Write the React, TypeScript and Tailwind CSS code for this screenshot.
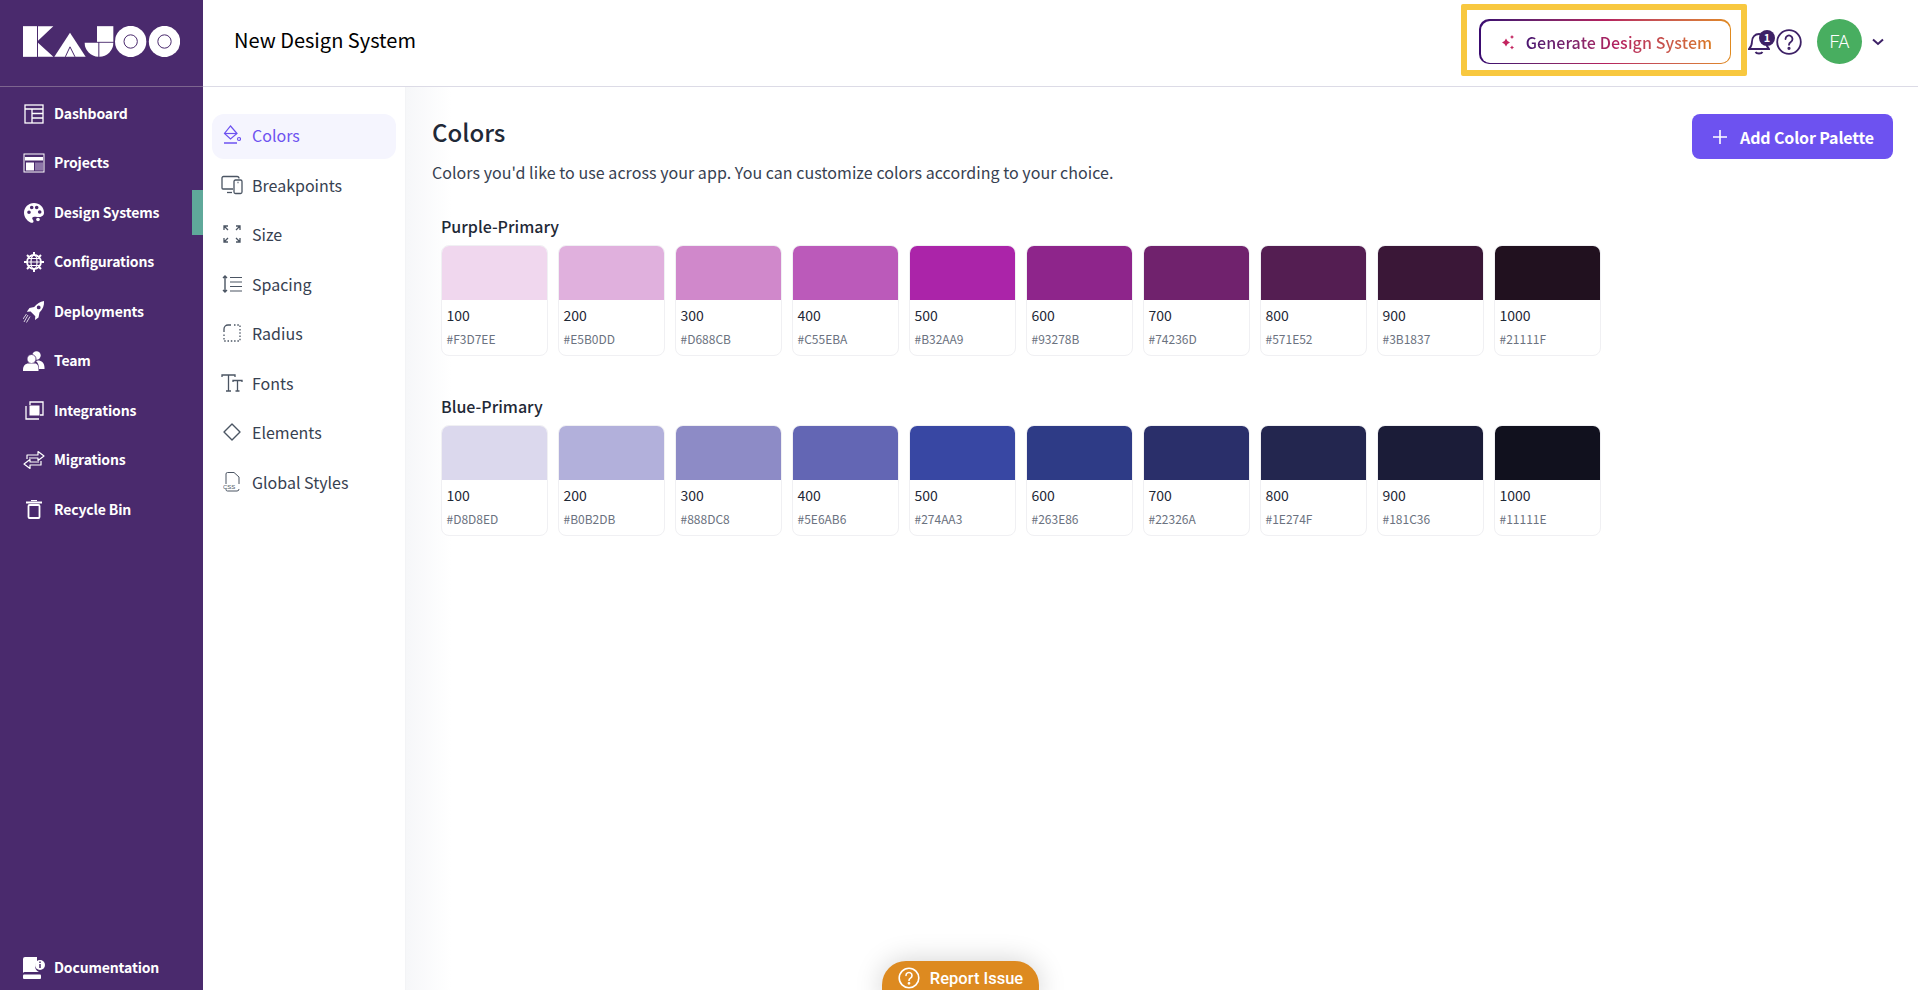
import type { ReactNode } from "react";

const SANS = "font-['Noto_Sans_CJK_JP','Noto_Sans',sans-serif]";

type Swatch = { readonly step: string; readonly hex: string; readonly fill: string };

const purple: Swatch[] = [
  { step: "100", hex: "#F3D7EE", fill: "bg-[#f0d7ee]" },
  { step: "200", hex: "#E5B0DD", fill: "bg-[#e0b0dd]" },
  { step: "300", hex: "#D688CB", fill: "bg-[#d088cb]" },
  { step: "400", hex: "#C55EBA", fill: "bg-[#bb5aba]" },
  { step: "500", hex: "#B32AA9", fill: "bg-[#ab24a9]" },
  { step: "600", hex: "#93278B", fill: "bg-[#8e258b]" },
  { step: "700", hex: "#74236D", fill: "bg-[#70226d]" },
  { step: "800", hex: "#571E52", fill: "bg-[#541e52]" },
  { step: "900", hex: "#3B1837", fill: "bg-[#3a1737]" },
  { step: "1000", hex: "#21111F", fill: "bg-[#21111f]" },
];

const blue: Swatch[] = [
  { step: "100", hex: "#D8D8ED", fill: "bg-[#dbd8ed]" },
  { step: "200", hex: "#B0B2DB", fill: "bg-[#b2b0db]" },
  { step: "300", hex: "#888DC8", fill: "bg-[#8d8bc6]" },
  { step: "400", hex: "#5E6AB6", fill: "bg-[#6366b4]" },
  { step: "500", hex: "#274AA3", fill: "bg-[#3847a3]" },
  { step: "600", hex: "#263E86", fill: "bg-[#2e3b86]" },
  { step: "700", hex: "#22326A", fill: "bg-[#2a2f6a]" },
  { step: "800", hex: "#1E274F", fill: "bg-[#23264f]" },
  { step: "900", hex: "#181C36", fill: "bg-[#1b1c38]" },
  { step: "1000", hex: "#11111E", fill: "bg-[#11111e]" },
];

const KajooLogo = () => (
  <svg width="157" height="31" viewBox="0 0 471 92" fill="white">
    <rect x="0" y="0" width="42" height="92" />
    <path d="M45 0h46L45 44zM45 50l46 42H45z" />
    <path d="M94 92 141 20l47 72z" />
    <path d="M127 92 141 62l15 30" fill="none" stroke="#4a2a6d" strokeWidth="3" />
    <path d="M222 0h49v47h-49z" />
    <path d="M185 50h41v42a42 42 0 0 1-41-42zM229 50h42a42 42 0 0 1-42 42z" />
    <circle cx="323" cy="46" r="47" />
    <circle cx="424.500" cy="46" r="47" />
    <circle cx="323" cy="46" r="20" fill="none" stroke="#4a2a6d" strokeWidth="3" />
    <circle cx="424.500" cy="46" r="20" fill="none" stroke="#4a2a6d" strokeWidth="3" />
  </svg>
);

const sideIcons: Record<string, ReactNode> = {
  Dashboard: (
    <svg width="20" height="20" viewBox="0 0 20 20" fill="none" stroke="white" strokeWidth="1.300">
      <rect x="1" y="1" width="18" height="18" />
      <path d="M1 5h18M8 5v14M8 9.500h11M8 14h11" />
    </svg>
  ),
  Projects: (
    <svg width="22" height="20" viewBox="0 0 22 20" fill="none">
      <rect x="1" y="1" width="20" height="18" stroke="white" />
      <rect x="2" y="4" width="18" height="3.500" fill="white" />
      <rect x="3" y="9.500" width="8" height="8" fill="white" />
      <rect x="12" y="9.500" width="8" height="8" fill="#8d76a8" />
    </svg>
  ),
  "Design Systems": (
    <svg width="20" height="20" viewBox="0 0 20 20" fill="white">
      <path
        fillRule="evenodd"
        d="M10 0C4.500 0 0 4.300 0 9.700c0 4.100 2.900 7.900 6 9.500 1.600.8 3.500.8 3.500-.8 0-1.700-2-2.300-1-3.900.7-1.100 2.700-.6 4.600-.5 3.500.3 6.900-.8 6.900-4.600C20 4 15.500 0 10 0zM5 11a1.800 1.800 0 1 1 0-3.600A1.800 1.800 0 0 1 5 11zm2.700-4.700a1.800 1.800 0 1 1 0-3.600 1.800 1.800 0 0 1 0 3.600zm5 0a1.800 1.800 0 1 1 0-3.600 1.800 1.800 0 0 1 0 3.600zm3 4.500a1.800 1.800 0 1 1 0-3.600 1.800 1.800 0 0 1 0 3.600z"
      />
      <circle cx="14" cy="16.500" r="1.800" />
    </svg>
  ),
  Configurations: (
    <svg width="20" height="20" viewBox="0 0 20 20" fill="none" stroke="white" strokeWidth="1.200">
      <circle cx="10" cy="10" r="7" strokeWidth="1.800" />
      <ellipse cx="10" cy="10" rx="3" ry="7" />
      <path d="M3 10h14M4 6.500h12M4 13.500h12" />
      <path d="M10 0v3M10 17v3M0 10h3M17 10h3M3 3l2 2M15 15l2 2M17 3l-2 2M5 15l-2 2" strokeWidth="2" />
    </svg>
  ),
  Deployments: (
    <svg width="22" height="22" viewBox="0 0 22 22" fill="white">
      <path
        fillRule="evenodd"
        d="M21 0c.4 4.500-1.200 8.500-4.500 11.500l-1 5-3.500 2.500.3-3.800-4.700-4.700-3.800.3L6.500 7l4.700-1C14 2.500 17 .6 21 0zm-5.300 4.500a1.900 1.900 0 1 0 0 3.800 1.900 1.900 0 0 0 0-3.800z"
      />
      <path d="M5 14 1 21M7 15.500 3.500 21.500M3.500 13 0 18" stroke="white" strokeWidth=".8" />
    </svg>
  ),
  Team: (
    <svg width="22" height="20" viewBox="0 0 22 20" fill="white">
      <circle cx="13.500" cy="4.500" r="4.200" />
      <path d="M15 9.500c3.500 0 6.500 2.500 6.500 7v1.500H16c0-3.500-1-6.500-3-8z" />
      <circle cx="8.500" cy="8" r="4.500" stroke="#4a2a6d" strokeWidth=".8" />
      <path d="M0 20v-1.500c0-4 3-6 5-6h7c2.500 0 3.500 2.500 3.500 6V20z" />
    </svg>
  ),
  Integrations: (
    <svg width="19" height="19" viewBox="0 0 19 19" fill="none" stroke="white" strokeWidth="1.300">
      <path d="M1 5v13h13M5 4V1h13v13h-3" />
      <rect x="4.500" y="4.500" width="10" height="10" fill="white" stroke="none" />
    </svg>
  ),
  Migrations: (
    <svg width="22" height="20" viewBox="0 0 22 20" fill="none" stroke="white" strokeWidth="1.200" strokeLinejoin="round">
      <path d="M4 9V5h11V1.500L21 6l-6 4.500V8H6" />
      <path d="M18 11v4H7v3.500L1 14l6-4.500V12h9" />
    </svg>
  ),
  "Recycle Bin": (
    <svg width="16" height="19" viewBox="0 0 16 19" fill="none" stroke="white">
      <path d="M0 2.500h16" strokeWidth="2" />
      <path d="M5 .5h6" strokeWidth="1.200" />
      <rect x="2.500" y="5" width="11" height="13" rx="1" strokeWidth="1.800" />
    </svg>
  ),
  Documentation: (
    <svg width="22" height="22" viewBox="0 0 22 22" fill="white">
      <path d="M2 0h12v5a6 6 0 0 0 2 10H2a2 2 0 0 0-2 1V2a2 2 0 0 1 2-2z" />
      <rect x="0" y="17.500" width="18" height="4.500" rx="1" />
      <circle cx="17" cy="8" r="5" />
      <path d="M17 7v4M17 4.500v1.500" stroke="#4a2a6d" strokeWidth="1.500" />
    </svg>
  ),
};

const subIcons: Record<string, ReactNode> = {
  Colors: (
    <svg width="18" height="20" viewBox="0 0 18 20" fill="none" stroke="#6d52f0" strokeWidth="1.200">
      <path d="M7.500 1 14 8.500 7.500 14 1.500 8.500z" />
      <path d="M1.500 8.500h12.500" />
      <path d="M1 18h13" strokeWidth="1.500" />
      <circle cx="16" cy="14" r="1.500" />
    </svg>
  ),
  Breakpoints: (
    <svg width="22" height="20" viewBox="0 0 22 20" fill="none" stroke="#4b5563" strokeWidth="1.300">
      <path d="M12 14H2a1 1 0 0 1-1-1V3a1.500 1.500 0 0 1 1.500-1.500H16a2 2 0 0 1 2 2" />
      <path d="M6 17.500h5" />
      <rect x="13" y="5" width="8" height="13.500" rx="1.500" />
      <path d="M16.500 7.500h1" />
    </svg>
  ),
  Size: (
    <svg width="18" height="18" viewBox="0 0 18 18" fill="none" stroke="#4b5563" strokeWidth="1.300">
      <path d="M1 5V1h4M1 1l4 4M17 5V1h-4M17 1l-4 4M1 13v4h4M1 17l4-4M17 13v4h-4M17 17l-4-4" />
    </svg>
  ),
  Spacing: (
    <svg width="20" height="18" viewBox="0 0 20 18" fill="none" stroke="#4b5563" strokeWidth="1.200">
      <path d="M3 1v16M1 3l2-2 2 2M1 15l2 2 2-2" strokeWidth="1.400" />
      <path d="M8 2.500h12M8 7h12M8 11.500h12M8 16h12" />
    </svg>
  ),
  Radius: (
    <svg width="18" height="18" viewBox="0 0 18 18" fill="none" stroke="#4b5563" strokeWidth="1.300">
      <path d="M1 8V5a4 4 0 0 1 4-4h3" />
      <path d="M11 1h6v16H1v-7" strokeDasharray="1.500 1.800" />
    </svg>
  ),
  Fonts: (
    <svg width="22" height="18" viewBox="0 0 22 18" fill="none" stroke="#4b5563" strokeWidth="1.300">
      <path d="M1 3V1h13v2M7.500 1v16M5 17h5" />
      <path d="M12 8V6.500h9V8M16.500 6.500V17M14.500 17h4" />
    </svg>
  ),
  Elements: (
    <svg width="18" height="18" viewBox="0 0 18 18" fill="none" stroke="#4b5563" strokeWidth="1.400" strokeLinejoin="round">
      <path d="M9 1l8 8-8 8-8-8z" />
    </svg>
  ),
  "Global Styles": (
    <svg width="18" height="20" viewBox="0 0 18 20" fill="none" stroke="#4b5563" strokeWidth="1">
      <path d="M3 12V2a1.500 1.500 0 0 1 1.500-1.500H11L16 5v7" />
      <path d="M3 17v.5A1.500 1.500 0 0 0 4.500 19H14a2 2 0 0 0 2-2" />
      <text x="0" y="16.500" fontSize="6" fill="#4b5563" stroke="none" fontFamily="Liberation Sans, sans-serif">CSS</text>
    </svg>
  ),
};

const sideItems = [
  "Dashboard",
  "Projects",
  "Design Systems",
  "Configurations",
  "Deployments",
  "Team",
  "Integrations",
  "Migrations",
  "Recycle Bin",
];

const subItems = ["Colors", "Breakpoints", "Size", "Spacing", "Radius", "Fonts", "Elements", "Global Styles"];

const SwatchCard = ({ swatch }: { readonly swatch: Swatch }) => (
  <div className="h-[111px] w-[107px] shrink-0 overflow-hidden rounded-[8px] border border-[#f0f0f3] bg-white">
    <div className={`h-[54px] ${swatch.fill}`} />
    <div className="px-[4.500px] pt-[5px] text-[14px] leading-[20px] text-[#1f2937]">{swatch.step}</div>
    <div className="px-[4.500px] pt-[6px] text-[12px] leading-[16px] text-[#6b7280]">{swatch.hex}</div>
  </div>
);

const Palette = ({ name, swatches }: { readonly name: string; readonly swatches: Swatch[] }) => (
  <section className="ml-[9px]">
    <h3 className="mb-[7px] h-[24px] text-[16px] leading-[24px] font-medium text-[#1f2937]">{name}</h3>
    <div className="flex gap-[10px]">
      {swatches.map((s) => (
        <SwatchCard key={s.step} swatch={s} />
      ))}
    </div>
  </section>
);

export default function App() {
  return (
    <div className={`flex h-[990px] w-[1918px] overflow-hidden bg-white ${SANS}`}>
      <aside className="flex w-[203px] shrink-0 flex-col bg-[#4a2a6d]">
        <div className="flex h-[87px] shrink-0 items-center border-b border-[#7d658f] pb-[4px] pl-[23px]">
          <KajooLogo />
        </div>
        <nav className="flex flex-col gap-[4.450px] pt-[4.500px]">
          {sideItems.map((item) => (
            <div
              key={item}
              className={`flex h-[45px] items-center border-r-[11px] pl-[23px] ${
                item === "Design Systems" ? "border-[#5fa89a]" : "border-transparent"
              }`}
            >
              <span className="mr-[9px] flex w-[22px] shrink-0 items-center justify-center">{sideIcons[item]}</span>
              <span className="pb-[1px] text-[14px] font-bold tracking-[-0.15px] text-white">{item}</span>
            </div>
          ))}
        </nav>
        <div className="mt-auto flex h-[44px] items-center pb-[1px] pl-[23px]">
          <span className="mr-[9px] flex w-[22px] shrink-0 items-center justify-center">{sideIcons.Documentation}</span>
          <span className="text-[14px] font-bold tracking-[-0.15px] text-white">Documentation</span>
        </div>
      </aside>

      <div className="flex min-w-0 flex-1 flex-col">
        <header className="flex h-[87px] shrink-0 items-center border-b border-[#dcdbe6] pb-[6px] pl-[31px]">
          <h1 className="text-[20px] font-normal text-black">New Design System</h1>
          <div className="ml-auto flex items-center">
            <div className="flex h-[72px] w-[286px] items-center rounded-[2px] border-[6px] border-[#f8c83f] pt-[3px] pl-[12px]">
              <div className="h-[45px] w-[252px] rounded-[10px] bg-gradient-to-r from-[#3a0a70] via-[#b5205e] to-[#e08a1e] p-[1.500px]">
                <div className="flex h-full items-center justify-center gap-[11px] rounded-[9px] bg-white pl-[3px]">
                  <svg width="14" height="16" viewBox="0 0 14 16" fill="#c3245f">
                    <path d="M5 4.500 6.500 7 9 8.500 6.500 10 5 12.500 3.500 10 1 8.500 3.500 7z" />
                    <path d="M11 1l.7 1.300L13 3l-1.300.7L11 5l-.7-1.300L9 3l1.300-.7zM11 11.500l.7 1.300 1.300.7-1.300.7-.7 1.300-.7-1.300-1.300-.7 1.300-.7z" />
                  </svg>
                  <span className="bg-gradient-to-r from-[#4a1470] via-[#b5205e] to-[#d9781f] bg-clip-text text-[16px] font-medium tracking-[0.1px] text-transparent">
                    Generate Design System
                  </span>
                </div>
              </div>
            </div>
            <div className="flex items-center pt-[3px]">
              <div className="relative h-[28px] w-[27px]">
                <svg width="22" height="24" viewBox="0 0 22 24" fill="none" stroke="#3d2166" strokeWidth="1.800" className="mt-[3px] ml-[1px]">
                  <path d="M1 18c2-2 3-3.500 3-7.500C4 6 7 3 11 3s7 3 7 7.500c0 4 1 5.500 3 7.500z" />
                  <path d="M7.500 21c1 2 6 2 7 0" />
                </svg>
                <span className="absolute top-[2px] left-[12px] flex h-[16px] w-[16px] items-center justify-center rounded-full bg-[#3d2166] text-[11px] leading-none font-bold text-white">
                  1
                </span>
              </div>
              <svg width="26" height="26" viewBox="0 0 26 26" fill="none" stroke="#3d2166" strokeWidth="1.800" className="ml-[2px]">
                <circle cx="13" cy="13" r="11.800" />
                <path d="M9.500 10a3.500 3.500 0 1 1 5.300 3c-1.200.8-1.800 1.400-1.800 2.800" strokeLinecap="round" />
                <circle cx="13" cy="19.300" r=".7" fill="#3d2166" />
              </svg>
              <div className="ml-[15px] flex h-[45px] w-[45px] items-center justify-center rounded-full bg-[#48ae60] font-['Roboto',sans-serif] text-[18px] font-light text-white">
                FA
              </div>
              <svg width="12" height="8" viewBox="0 0 12 8" fill="none" stroke="#3d2166" strokeWidth="2" className="mr-[34px] ml-[10px]">
                <path d="M1 1.500 6 6l5-4.500" />
              </svg>
            </div>
          </div>
        </header>

        <div className="flex min-h-0 flex-1">
          <nav className="flex w-[202px] shrink-0 flex-col gap-[4.500px] px-[9px] pt-[27px]">
            {subItems.map((item) => (
              <div
                key={item}
                className={`flex h-[45px] shrink-0 items-center rounded-[12px] pb-[3px] pl-[9px] text-[16px] ${
                  item === "Colors" ? "bg-[#f5f5fe] text-[#6d52f0]" : "text-[#374151]"
                }`}
              >
                <span className="mr-[9px] flex w-[22px] shrink-0 items-center justify-center">{subIcons[item]}</span>
                {item}
              </div>
            ))}
          </nav>

          <main className="relative min-w-0 flex-1 border-l border-[#f3f4f6] bg-gradient-to-r from-[#f6f7f9] from-0% to-white to-[3%] pt-[27px] pr-[25px] pl-[26px]">
            <div className="flex items-start justify-between">
              <div>
                <h2 className="h-[36px] text-[24px] leading-[36px] font-medium text-[#1f2937]">Colors</h2>
                <p className="mt-[10px] text-[16px] leading-[24px] tracking-[0.05px] text-[#374151]">
                  Colors you'd like to use across your app. You can customize colors according to your choice.
                </p>
              </div>
              <button className="flex h-[45px] w-[201px] items-center justify-center gap-[13px] rounded-[8px] bg-[#6d52f0] pl-[2px] text-[16px] font-bold tracking-[-0.15px] text-white">
                <svg width="14" height="14" viewBox="0 0 14 14" stroke="white" strokeWidth="1.600">
                  <path d="M7 0v14M0 7h14" />
                </svg>
                Add Color Palette
              </button>
            </div>
            <div className="mt-[30px] flex flex-col gap-[38px]">
              <Palette name="Purple-Primary" swatches={purple} />
              <Palette name="Blue-Primary" swatches={blue} />
            </div>
          </main>
        </div>
      </div>

      <div className="absolute top-[961px] left-[882px] flex h-[40px] w-[157px] items-start justify-center gap-[10px] rounded-t-[24px] bg-[#dd8a20] pt-[6px] font-['Roboto',sans-serif] text-[16.500px] font-medium text-white shadow-[0_0_28px_rgba(0,0,0,0.18)]">
        <svg width="22" height="22" viewBox="0 0 22 22" fill="none" stroke="white" strokeWidth="1.600">
          <circle cx="11" cy="11" r="9.800" />
          <path d="M8 8.500a3 3 0 1 1 4.500 2.600c-1 .6-1.500 1.200-1.500 2.400" strokeLinecap="round" />
          <circle cx="11" cy="16.300" r=".6" fill="white" />
        </svg>
        Report Issue
      </div>
    </div>
  );
}
